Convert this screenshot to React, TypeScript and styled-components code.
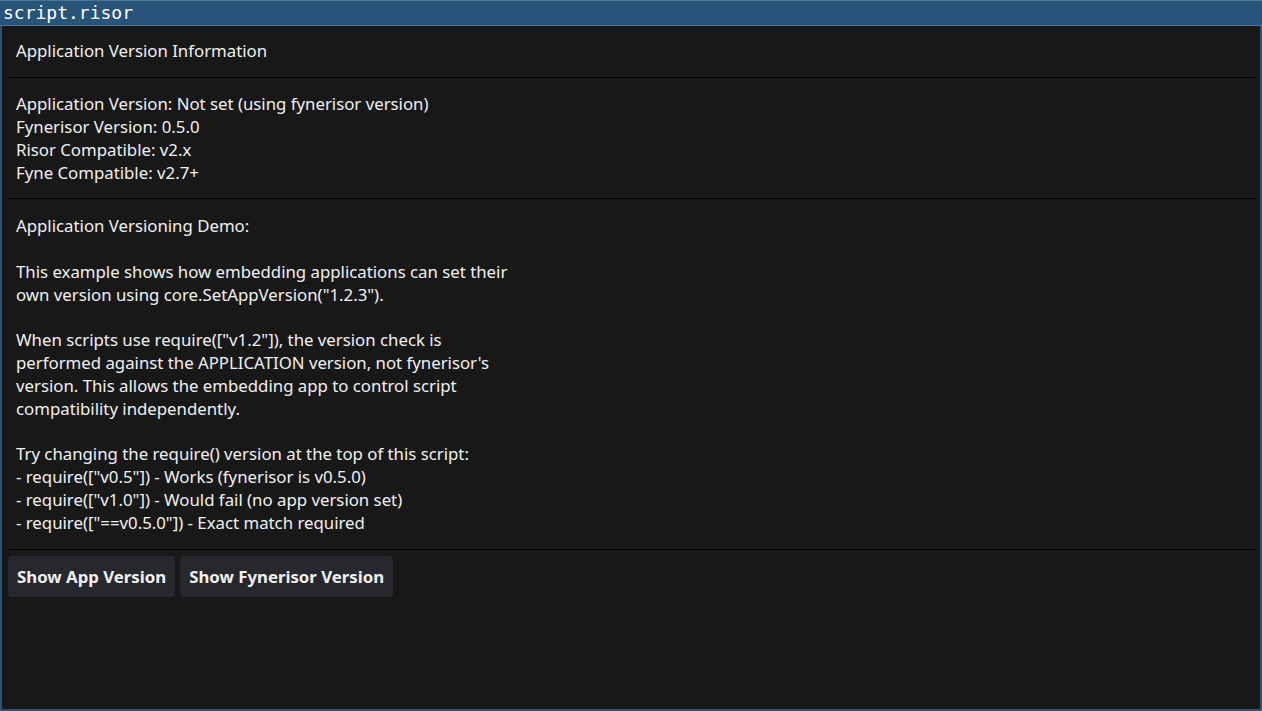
import styled, { createGlobalStyle } from "styled-components";

const GlobalStyle = createGlobalStyle`
  html, body {
    margin: 0;
    padding: 0;
    background: #181818;
    overflow: hidden;
  }
  * {
    box-sizing: border-box;
  }
`;

const lines = {
  info: [
    "Application Version: Not set (using fynerisor version)",
    "Fynerisor Version: 0.5.0",
    "Risor Compatible: v2.x",
    "Fyne Compatible: v2.7+",
  ],
  demo: [
    "Application Versioning Demo:",
    "",
    "This example shows how embedding applications can set their",
    'own version using core.SetAppVersion("1.2.3").',
    "",
    'When scripts use require(["v1.2"]), the version check is',
    "performed against the APPLICATION version, not fynerisor's",
    "version. This allows the embedding app to control script",
    "compatibility independently.",
    "",
    "Try changing the require() version at the top of this script:",
    '- require(["v0.5"]) - Works (fynerisor is v0.5.0)',
    '- require(["v1.0"]) - Would fail (no app version set)',
    '- require(["==v0.5.0"]) - Exact match required',
  ],
};

function App() {
  return (
    <Window>
      <GlobalStyle />
      <TitleBar>script.risor</TitleBar>
      <Body>
        <Label $top={7} $bottom={9}>
          Application Version Information
        </Label>
        <Separator />
        <Label $top={8} $bottom={8}>
          {lines.info.map((l, i) => (
            <Line key={i}>{l}</Line>
          ))}
        </Label>
        <Separator />
        <Label $top={10} $bottom={8} $lh={22.85}>
          {lines.demo.map((l, i) => (
            <Line key={i}>{l || "\u00a0"}</Line>
          ))}
        </Label>
        <Separator />
        <ButtonRow>
          <Button>Show App Version</Button>
          <Button>Show Fynerisor Version</Button>
        </ButtonRow>
      </Body>
    </Window>
  );
}

const Window = styled.div`
  width: 1262px;
  height: 711px;
  display: flex;
  flex-direction: column;
  background: #285479;
`;

const TitleBar = styled.div`
  height: 26px;
  padding: 0 3px;
  border-top: 1px solid #4a7596;
  border-bottom: 1px solid #4a7596;
  background: #285479;
  color: #ffffff;
  font-family: "DejaVu Sans Mono", monospace;
  font-size: 18px;
  line-height: 23px;
  white-space: pre;
`;

const Body = styled.div`
  flex: 1;
  margin: 0 2px 2px 2px;
  padding: 6px 5px 6px 6px;
  background: #181818;
  display: flex;
  flex-direction: column;
  gap: 6px;
`;

const Label = styled.div<{ $top: number; $bottom: number; $lh?: number }>`
  padding: ${(p) => p.$top}px 8px ${(p) => p.$bottom}px;
  color: #f0f0f0;
  font-family: "Noto Sans", sans-serif;
  font-size: 16.8px;
  line-height: ${(p) => p.$lh ?? 23}px;
`;

const Line = styled.div`
  white-space: pre;
`;

const Separator = styled.div`
  height: 1px;
  background: #000000;
`;

const ButtonRow = styled.div`
  display: flex;
  gap: 5px;
`;

const Button = styled.button`
  height: 41px;
  padding: 0 9px;
  border: none;
  border-radius: 4px;
  background: #27282d;
  color: #f0f0f0;
  font-family: "Noto Sans", sans-serif;
  font-weight: 700;
  font-size: 16.8px;
`;

export default App;
